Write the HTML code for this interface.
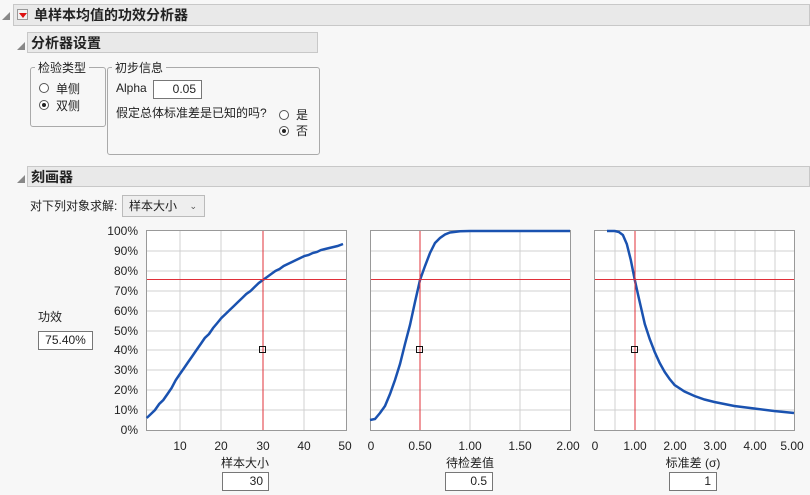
<!DOCTYPE html>
<html><head><meta charset="utf-8"><style>
body{margin:0;width:810px;height:495px;background:#f7f7f7;font-family:"Liberation Sans","Noto Sans CJK SC",sans-serif;font-size:12px;color:#222;position:relative;overflow:hidden}
.a{position:absolute;white-space:nowrap}
.hdr{position:absolute;background:#e9e9e9;border:1px solid #c8c8c8;font-weight:bold;font-size:14px;box-sizing:border-box;padding-left:3px;line-height:20px}
.tri{position:absolute;width:0;height:0;border-left:8px solid transparent;border-bottom:8px solid #888}
.box{position:absolute;border:1px solid #aaa;border-radius:3px}
.leg{position:absolute;background:#f7f7f7;padding:0 3px;top:-9px;left:4px}
.rad{position:absolute;width:10px;height:10px;border:1px solid #555;border-radius:50%;background:#fff;box-sizing:border-box}
.rad.on::after{content:"";position:absolute;left:2px;top:2px;width:4px;height:4px;border-radius:50%;background:#222}
.inp{position:absolute;background:#fff;border:1px solid #777;box-sizing:border-box;text-align:right;padding-right:5px;line-height:16px}
</style></head><body>
<div class="tri" style="left:2px;top:12px"></div>
<div class="hdr" style="left:13px;top:4px;width:797px;height:22px;padding-left:20px">单样本均值的功效分析器</div>
<div class="a" style="left:17px;top:9px;width:11px;height:11px;border:1px solid #999;background:#f2f2f2;box-sizing:border-box"></div>
<div class="a" style="left:19px;top:13px;width:0;height:0;border-left:4px solid transparent;border-right:4px solid transparent;border-top:5px solid #d11"></div>

<div class="tri" style="left:17px;top:42px"></div>
<div class="hdr" style="left:27px;top:32px;width:291px;height:21px">分析器设置</div>

<div class="box" style="left:30px;top:67px;width:74px;height:58px"><span class="leg">检验类型</span></div>
<div class="rad" style="left:39px;top:83px"></div><div class="a" style="left:56px;top:80px">单侧</div>
<div class="rad on" style="left:39px;top:100px"></div><div class="a" style="left:56px;top:97px">双侧</div>

<div class="box" style="left:107px;top:67px;width:211px;height:86px"><span class="leg">初步信息</span></div>
<div class="a" style="left:116px;top:81px">Alpha</div>
<div class="inp" style="left:153px;top:80px;width:49px;height:19px">0.05</div>
<div class="a" style="left:116px;top:104px">假定总体标准差是已知的吗?</div>
<div class="rad" style="left:279px;top:110px"></div><div class="a" style="left:296px;top:106px">是</div>
<div class="rad on" style="left:279px;top:126px"></div><div class="a" style="left:296px;top:122px">否</div>

<div class="tri" style="left:17px;top:175px"></div>
<div class="hdr" style="left:27px;top:166px;width:783px;height:21px">刻画器</div>
<div class="a" style="left:30px;top:197px">对下列对象求解:</div>
<div class="a" style="left:122px;top:195px;width:83px;height:22px;border:1px solid #bbb;background:#eee;box-sizing:border-box;line-height:20px;padding-left:6px">样本大小<span style="position:absolute;right:7px;font-size:9px;color:#555">&#8964;</span></div>

<div class="a" style="left:38px;top:308px">功效</div>
<div class="inp" style="left:38px;top:331px;width:55px;height:19px;text-align:center;padding:0">75.40%</div>

<svg class="a" style="left:0;top:0" width="810" height="495" font-family="Liberation Sans" font-size="12" fill="#222">
<rect x="146" y="231" width="200" height="199" fill="#fff"/>
<rect x="370" y="231" width="200" height="199" fill="#fff"/>
<rect x="595" y="231" width="199" height="199" fill="#fff"/>
<g stroke="#d0d0d0" stroke-width="1">
<path d="M146 251H346M146 271H346M146 291H346M146 311H346M146 331H346M146 350H346M146 370H346M146 390H346M146 410H346"/>
<path d="M370 251H570M370 271H570M370 291H570M370 311H570M370 331H570M370 350H570M370 370H570M370 390H570M370 410H570"/>
<path d="M595 251H794M595 271H794M595 291H794M595 311H794M595 331H794M595 350H794M595 370H794M595 390H794M595 410H794"/>
<path d="M180 231V430M221 231V430M263 231V430M304 231V430"/>
<path d="M420 231V430M470 231V430M520 231V430"/>
<path d="M615 231V430M635 231V430M655 231V430M675 231V430M695 231V430M715 231V430M735 231V430M755 231V430M775 231V430"/>
</g>
<g fill="none" stroke="#999" stroke-width="1">
<rect x="146.5" y="230.5" width="200" height="200"/>
<rect x="370.5" y="230.5" width="200" height="200"/>
<rect x="594.5" y="230.5" width="200" height="200"/>
</g>
<g fill="none" stroke="#1a52b0" stroke-width="2.5">
<polyline points="146.7,418 150.9,414 155,410 159.2,404 163.3,400 167.5,394 171.6,388 175.8,380 179.9,374 184.1,368 188.2,362 192.4,356 196.5,350 200.7,344 204.8,338 209,334 213.1,328 217.3,323 221.4,318 225.6,314 229.7,310 233.9,306 238,302 242.2,298 246.3,294 250.5,291 254.6,287 258.8,283 262.9,280 267.1,277 271.2,274 275.4,271 279.5,269 283.7,266 287.8,264 292,262 296.1,260 300.3,258 304.4,256 308.6,255 312.7,253 316.9,252 321,250 325.2,249 329.3,248 333.5,247 337.6,246 343,244"/>
<polyline points="370,420 375,419 380,413 385,406 390,394 395,380 400,364 405,344 410,325 415,302 420,280 425,266 430,253 435,243 440,238 445,234.5 450,232.5 460,231.3 470,231 570,231"/>
<polyline points="607,231 614.9,231 618.9,232 622.9,235 626.8,244 630.8,260 634.8,280 638.8,298 641.8,311 644.8,324 649.7,339 654.7,352 659.7,363 664.7,372 669.6,379 674.6,385 684.5,391.5 694.5,396 704.5,399.5 714.4,402 734.3,406 754.2,408.5 774.1,411 794,413"/>
</g>
<g stroke="#e0303a" stroke-width="1">
<path d="M263 231V430M147 279.5H346"/>
<path d="M420 231V430M371 279.5H570"/>
<path d="M635 231V430M595 279.5H794"/>
</g>
<g fill="none" stroke="#111"><rect x="259.5" y="346.5" width="6" height="6"/><rect x="416.5" y="346.5" width="6" height="6"/><rect x="631.5" y="346.5" width="6" height="6"/></g>
<g text-anchor="end">
<text x="138" y="235">100%</text><text x="138" y="255">90%</text><text x="138" y="275">80%</text><text x="138" y="295">70%</text><text x="138" y="315">60%</text><text x="138" y="335">50%</text><text x="138" y="354">40%</text><text x="138" y="374">30%</text><text x="138" y="394">20%</text><text x="138" y="414">10%</text><text x="138" y="434">0%</text>
</g>
<g text-anchor="middle">
<text x="180" y="450">10</text><text x="221" y="450">20</text><text x="263" y="450">30</text><text x="304" y="450">40</text><text x="345" y="450">50</text>
<text x="371" y="450">0</text><text x="420" y="450">0.50</text><text x="470" y="450">1.00</text><text x="520" y="450">1.50</text><text x="568" y="450">2.00</text>
<text x="595" y="450">0</text><text x="635" y="450">1.00</text><text x="675" y="450">2.00</text><text x="715" y="450">3.00</text><text x="755" y="450">4.00</text><text x="792" y="450">5.00</text>
<text x="245" y="467" font-family="Liberation Sans,Noto Sans CJK SC">样本大小</text>
<text x="470" y="467" font-family="Liberation Sans,Noto Sans CJK SC">待检差值</text>
<text x="693" y="467" font-family="Liberation Sans,Noto Sans CJK SC">标准差 (σ)</text>
</g>
</svg>
<div class="inp" style="left:222px;top:472px;width:47px;height:19px">30</div>
<div class="inp" style="left:445px;top:472px;width:48px;height:19px">0.5</div>
<div class="inp" style="left:669px;top:472px;width:48px;height:19px">1</div>
</body></html>
